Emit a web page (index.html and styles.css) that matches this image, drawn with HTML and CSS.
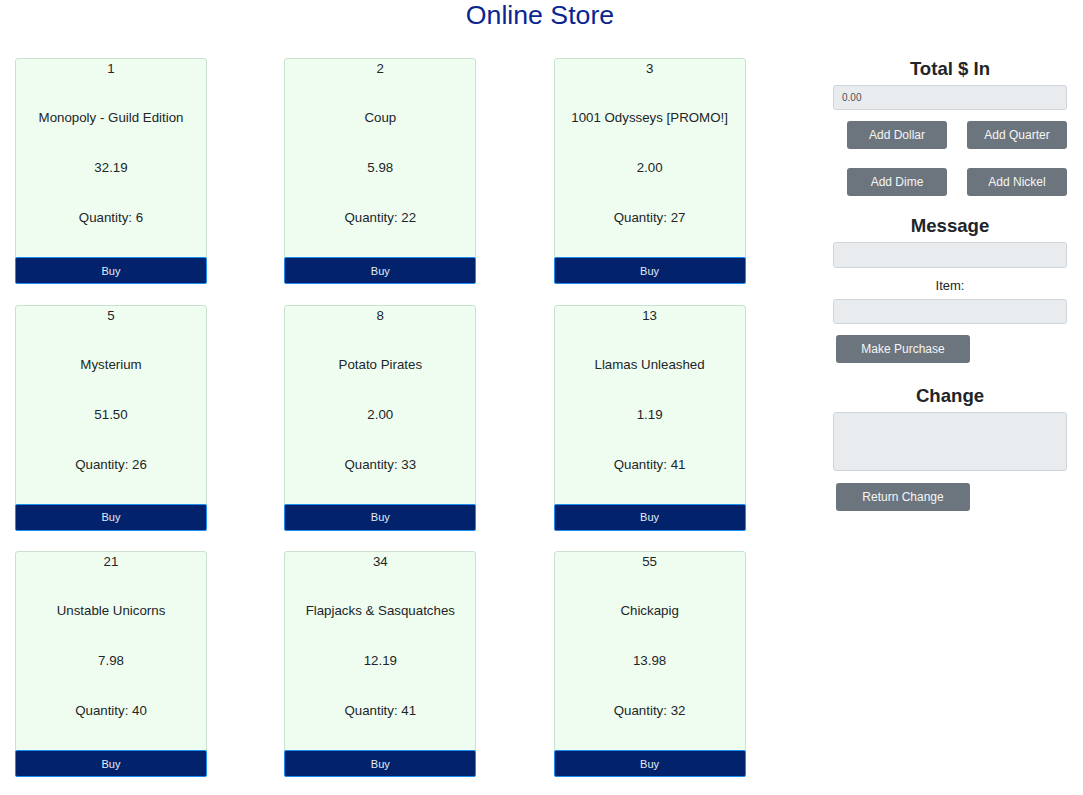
FILE: index.html
```html
<!DOCTYPE html>
<html>
<head>
<meta charset="utf-8">
<title>Online Store</title>
<link rel="stylesheet" href="styles.css">
</head>
<body>
<h1 class="title">Online Store</h1>
<div class="layout">
  <div class="items">
    <div class="card"><div class="num">1</div><div class="line name">Monopoly - Guild Edition</div><div class="line">32.19</div><div class="line">Quantity: 6</div><button class="buy">Buy</button></div>
    <div class="card"><div class="num">2</div><div class="line name">Coup</div><div class="line">5.98</div><div class="line">Quantity: 22</div><button class="buy">Buy</button></div>
    <div class="card"><div class="num">3</div><div class="line name">1001 Odysseys [PROMO!]</div><div class="line">2.00</div><div class="line">Quantity: 27</div><button class="buy">Buy</button></div>
    <div class="card"><div class="num">5</div><div class="line name">Mysterium</div><div class="line">51.50</div><div class="line">Quantity: 26</div><button class="buy">Buy</button></div>
    <div class="card"><div class="num">8</div><div class="line name">Potato Pirates</div><div class="line">2.00</div><div class="line">Quantity: 33</div><button class="buy">Buy</button></div>
    <div class="card"><div class="num">13</div><div class="line name">Llamas Unleashed</div><div class="line">1.19</div><div class="line">Quantity: 41</div><button class="buy">Buy</button></div>
    <div class="card"><div class="num">21</div><div class="line name">Unstable Unicorns</div><div class="line">7.98</div><div class="line">Quantity: 40</div><button class="buy">Buy</button></div>
    <div class="card"><div class="num">34</div><div class="line name">Flapjacks &amp; Sasquatches</div><div class="line">12.19</div><div class="line">Quantity: 41</div><button class="buy">Buy</button></div>
    <div class="card"><div class="num">55</div><div class="line name">Chickapig</div><div class="line">13.98</div><div class="line">Quantity: 32</div><button class="buy">Buy</button></div>
  </div>
  <div class="panel">
    <h2 class="heading">Total $ In</h2>
    <div class="field total">0.00</div>
    <div class="coins">
      <button class="btn coin">Add Dollar</button>
      <button class="btn coin">Add Quarter</button>
      <button class="btn coin">Add Dime</button>
      <button class="btn coin">Add Nickel</button>
    </div>
    <h2 class="heading msg">Message</h2>
    <div class="field message"></div>
    <div class="label">Item:</div>
    <div class="field item"></div>
    <button class="btn wide purchase">Make Purchase</button>
    <h2 class="heading change">Change</h2>
    <div class="field changebox"></div>
    <button class="btn wide ret">Return Change</button>
  </div>
</div>
</body>
</html>
```
FILE: styles.css
```css
* { box-sizing: border-box; }
body {
  margin: 0;
  font-family: "Liberation Sans", Arial, sans-serif;
  color: #212529;
  background: #fff;
}
.title {
  margin: 0;
  text-align: center;
  font-size: 26.7px;
  font-weight: normal;
  line-height: 30px;
  color: #0a258f;
  padding-right: 3px;
}
.layout {
  display: flex;
  justify-content: space-between;
  margin-top: 28px;
  padding: 0 16px 0 15px;
}
.items {
  display: grid;
  grid-template-columns: repeat(3, 192px);
  column-gap: 77.3px;
  row-gap: 20.5px;
}
.card {
  height: 226px;
  background: #effdf0;
  border: 1px solid #c9e2cf;
  border-radius: 3px;
  display: flex;
  flex-direction: column;
  align-items: center;
  font-size: 13.3px;
  text-align: center;
}
.num {
  line-height: 19px;
}
.line {
  line-height: 20px;
  margin-top: 30px;
}
.buy {
  margin-top: auto;
  width: calc(100% + 2px);
  margin-left: -1px;
  margin-right: -1px;
  margin-bottom: -1px;
  height: 27px;
  background: #02236b;
  border: 1px solid #1a8ef0;
  border-radius: 2px;
  color: #e6ebf5;
  font-family: "Liberation Sans", Arial, sans-serif;
  font-size: 11px;
  line-height: 24px;
  padding: 0;
}
.panel {
  width: 234px;
  display: flex;
  flex-direction: column;
}
.heading {
  margin: 0;
  font-size: 18.6px;
  font-weight: bold;
  line-height: 22px;
  text-align: center;
  color: #212529;
}
.field {
  background: #e9ecef;
  border: 1px solid #ced4da;
  border-radius: 3px;
  margin-top: 5px;
}
.total {
  height: 25px;
  font-size: 10px;
  line-height: 23px;
  padding-left: 8px;
  color: #495057;
}
.coins {
  display: grid;
  grid-template-columns: 100px 100px;
  column-gap: 20px;
  row-gap: 19px;
  justify-content: end;
  margin-top: 11px;
}
.btn {
  height: 28px;
  background: #6c757d;
  border: none;
  border-radius: 3px;
  color: #f4f5f6;
  font-family: "Liberation Sans", Arial, sans-serif;
  font-size: 12px;
  padding: 0;
}
.msg { margin-top: 19px; }
.message { height: 26px; }
.label {
  margin-top: 9px;
  font-size: 13px;
  line-height: 18px;
  text-align: center;
}
.item { height: 25px; margin-top: 4px; }
.wide {
  width: 134px;
  margin-left: 3px;
}
.purchase { margin-top: 11px; }
.change { margin-top: 22px; }
.changebox { height: 59px; }
.ret { margin-top: 12px; }
```
